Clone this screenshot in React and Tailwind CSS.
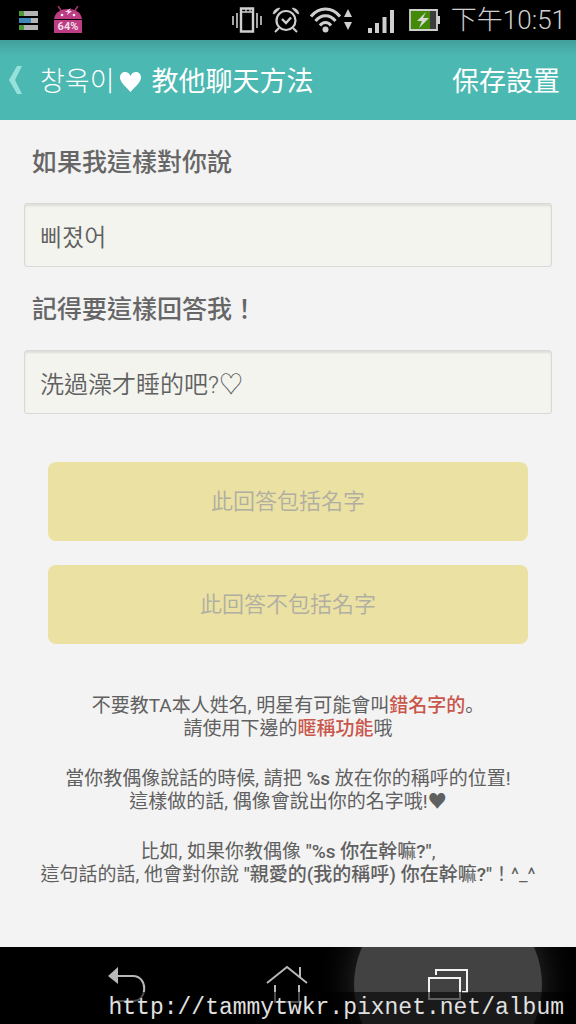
import React from 'react';

const NotificationIcons = () => (
  <div className="flex items-center gap-4">
    <svg width="19" height="19" viewBox="0 0 19 19" aria-hidden="true">
      <path d="M0 0h19v5H0zM0 7h19v5H0zM0 14h19v5H0z" fill="#b4b4b4" />
      <path d="M0 0h5v5H0zM0 14h5v5H0z" fill="#4f9a35" />
      <path d="M0 7h12v5H0z" fill="#3f86b8" />
    </svg>
    <span className="relative flex h-7 w-7">
      <svg width="28" height="28" viewBox="0 0 28 28" aria-hidden="true">
        <path d="M4 0l4 6M24 0l-4 6" stroke="#a92f74" strokeWidth="1.5" />
        <path d="M0 13C1 6 7 3 14 3s13 3 14 10z" fill="#bd3c84" />
        <path d="M0 14h28v13H0z" fill="#bd3c84" />
        <circle cx="8" cy="9" r="1.3" fill="#fff" />
        <circle cx="20" cy="9" r="1.3" fill="#fff" />
        <path d="M17 2l-6 4h3l-1 3 5-4h-3z" fill="#f3dcea" />
      </svg>
      <span className="absolute inset-x-0 bottom-0 text-center text-[11px] leading-[14px] font-bold text-[#f3dcea]">
        64%
      </span>
    </span>
  </div>
);

const StatusIcons = () => (
  <div className="flex items-center text-[#cfcfcf]">
    <svg width="30" height="26" viewBox="0 0 30 26" fill="none" stroke="currentColor" aria-hidden="true">
      <path d="M9 1.5h12v23H9z" strokeWidth="2.4" />
      <path d="M9 5h12M14 2v3M18 2v3" strokeWidth="1.3" />
      <path d="M5 6v15M25 6v15" strokeWidth="1.6" />
      <path d="M1 9v9M29 9v9" strokeWidth="1.6" />
    </svg>
    <svg className="ml-2.5" width="28" height="26" viewBox="0 0 28 26" fill="none" stroke="currentColor" strokeWidth="2" aria-hidden="true">
      <circle cx="14" cy="13.5" r="9.5" strokeWidth="2.2" />
      <path d="M10 12l4 4 5-5.500" strokeWidth="2.4" />
      <path d="M1 7C1.500 3.500 4 1 8 1L6.500 3 3 6.500zM27 7c-.5-3.500-3-6-7-6l1.500 2L25 6.500z" fill="currentColor" strokeWidth="0.5" />
      <path d="M7 21l-4 4M21 21l4 4" />
    </svg>
    <svg className="ml-2.5" width="43" height="26" viewBox="0 0 43 26" fill="none" stroke="currentColor" strokeWidth="3" aria-hidden="true">
      <path d="M1 9.5C9-.5 22-.5 30 9.5" />
      <path d="M5.500 14c5.500-7 14.500-7 20 0" />
      <path d="M10 18.5c3-4 8-4 11 0" />
      <circle cx="15.5" cy="22.5" r="3" fill="currentColor" stroke="none" />
      <path d="M38 2l4 8h-8zM38 23l4-8h-8z" fill="currentColor" stroke="none" />
    </svg>
    <svg className="ml-3.5" width="28" height="26" viewBox="0 0 28 26" fill="currentColor" aria-hidden="true">
      <path d="M1 21h4v5H1zM8 16h4v10H8zM15.500 10h4v16h-4zM23 3h4v23h-4z" />
    </svg>
    <svg className="ml-3.5" width="32" height="24" viewBox="0 0 32 24" aria-hidden="true">
      <path d="M1 2h27v20H1z" fill="#3c3c3c" />
      <path d="M2 3h19v18H2z" fill="#438a08" />
      <path d="M1 2h27v20H1z" fill="none" stroke="currentColor" strokeWidth="1.8" />
      <path d="M28 8h3v8h-3z" fill="currentColor" />
      <path d="M17 4L8 13h5l-3 7 10-10h-6z" fill="#d8d8d8" />
    </svg>
    <time className="ml-2.5 text-[26px] leading-8 font-light">下午10:51</time>
  </div>
);

const moveCaretToEnd = (e) => {
  const end = e.target.value.length;
  e.target.setSelectionRange(end, end);
};

const Field = ({ id, label, value, autoFocus }) => (
  <div className="flex flex-col gap-6">
    <label htmlFor={id} className="px-2 pt-px text-[25px] leading-8 font-medium text-[#666]">
      {label}
    </label>
    <input
      id={id}
      type="text"
      defaultValue={value}
      autoFocus={autoFocus}
      onFocus={moveCaretToEnd}
      className="h-16 w-full rounded-[3px] border border-[#d8d8d6] bg-[#f3f4ee] px-[15px] text-2xl font-[350] text-[#606060] caret-white shadow-[inset_0_2px_2px_#dededa] outline-none"
    />
  </div>
);

const AnswerButton = ({ children }) => (
  <button
    type="button"
    className="h-[79px] w-full rounded-lg bg-[#eae1a2] text-[22px] font-[350] text-[#b0aea2]"
  >
    {children}
  </button>
);

const NavBar = () => (
  <nav className="relative flex h-[77px] justify-center overflow-hidden bg-black">
    <div className="flex w-full justify-between px-[34px]">
      <button type="button" aria-label="Back" className="flex w-[186px] justify-center pt-5">
        <svg width="38" height="36" viewBox="0 0 38 36" fill="none" aria-hidden="true">
          <path d="M9 9h16c15 0 15 25 0 25h-17" stroke="#b8b8b8" strokeWidth="2" />
          <path d="M0 9l10-9v17z" fill="#b8b8b8" />
        </svg>
      </button>
      <button type="button" aria-label="Home" className="flex flex-1 justify-center pt-4">
        <svg width="42" height="40" viewBox="0 0 42 40" fill="none" stroke="#b8b8b8" strokeWidth="2" aria-hidden="true">
          <path d="M1 20L21 4l20 16M34 4v10M9 22v17h24V22" />
        </svg>
      </button>
      <button
        type="button"
        aria-label="Recent apps"
        className="-mt-14 flex h-[188px] w-[188px] justify-center rounded-full bg-[#424242] pt-[77px] shadow-[0_0_36px_#303030]"
      >
        <svg width="40" height="33" viewBox="0 0 40 33" fill="none" stroke="#f2f2f2" strokeWidth="2" aria-hidden="true">
          <path d="M1 10h31v21H1zM8 7V2h31v22h-5" />
        </svg>
      </button>
    </div>
    <a
      href="http://tammytwkr.pixnet.net/album"
      className="absolute right-0 bottom-0 bg-black/60 px-3 font-['Liberation_Mono',monospace] text-[23px] leading-8 text-[#e0e0e0]"
    >
      http://tammytwkr.pixnet.net/album
    </a>
  </nav>
);

export default function App() {
  return (
    <div
      lang="zh-Hant"
      className="flex min-h-screen flex-col bg-[#f3f3f3] font-[Roboto,'Noto_Sans_CJK_TC','Noto_Sans_CJK_KR',sans-serif]"
    >
      <div className="flex h-10 items-center justify-between bg-black pr-2.5 pl-[19px]">
        <NotificationIcons />
        <StatusIcons />
      </div>

      <header className="flex h-20 items-center bg-[#4cb8b2] bg-linear-to-b from-[#429f9a] to-[#4cb8b2] to-20% pr-4 pl-2 text-[27px] text-white">
        <button type="button" aria-label="Back">
          <svg width="15" height="30" viewBox="0 0 15 30" aria-hidden="true">
            <path d="M9 1h5L7 15l7 14H9L1 15z" fill="#98e0da" />
          </svg>
        </button>
        <h1 className="ml-[17px] flex items-center pt-1">
          <span className="font-light">창욱이</span>
          <svg className="mx-1" width="23" height="22" viewBox="0 0 23 22" fill="#fff" aria-hidden="true">
            <path d="M11.500 21C6 15 1 11 1 6.500 1 3 3.500 1 6 1c2.500 0 4.500 1.500 5.500 4 1-2.500 3-4 5.500-4s5 2 5 5.500C22 11 17 15 11.500 21z" />
          </svg>
          <span className="ml-1.5">教他聊天方法</span>
        </h1>
        <button type="button" className="ml-auto pt-1">
          保存設置
        </button>
      </header>

      <main className="flex-1 px-6 pt-[26px]">
        <form className="flex flex-col gap-[26px]">
          <Field id="question" label="如果我這樣對你說" value="삐졌어" />
          <Field id="answer" label="記得要這樣回答我！" value="洗過澡才睡的吧?♡" autoFocus />
        </form>

        <div className="mt-12 flex flex-col gap-6 px-6">
          <AnswerButton>此回答包括名字</AnswerButton>
          <AnswerButton>此回答不包括名字</AnswerButton>
        </div>

        <div className="-mx-2 mt-12 flex flex-col gap-[27px] text-center text-[19px] leading-[23px] text-[#606060]">
          <p>
            不要教TA本人姓名, 明星有可能會叫<strong className="font-medium text-[#c9564a]">錯名字的</strong>
            <span lang="zh-Hans" className="font-['Noto_Sans_CJK_SC',sans-serif]">。</span>
            <br />
            請使用下邊的<strong className="font-medium text-[#c9564a]">暱稱功能</strong>哦
          </p>
          <p>
            當你教偶像說話的時候, 請把 <strong className="font-medium">%s</strong> 放在你的稱呼的位置!
            <br />
            這樣做的話, 偶像會說出你的名字哦!♥
          </p>
          <p>
            比如, 如果你教偶像 <strong className="font-medium">"%s 你在幹嘛?"</strong>,
            <br />
            這句話的話, 他會對你說 <strong className="font-medium">"親愛的(我的稱呼) 你在幹嘛?"</strong>！^_^
          </p>
        </div>
      </main>

      <NavBar />
    </div>
  );
}
